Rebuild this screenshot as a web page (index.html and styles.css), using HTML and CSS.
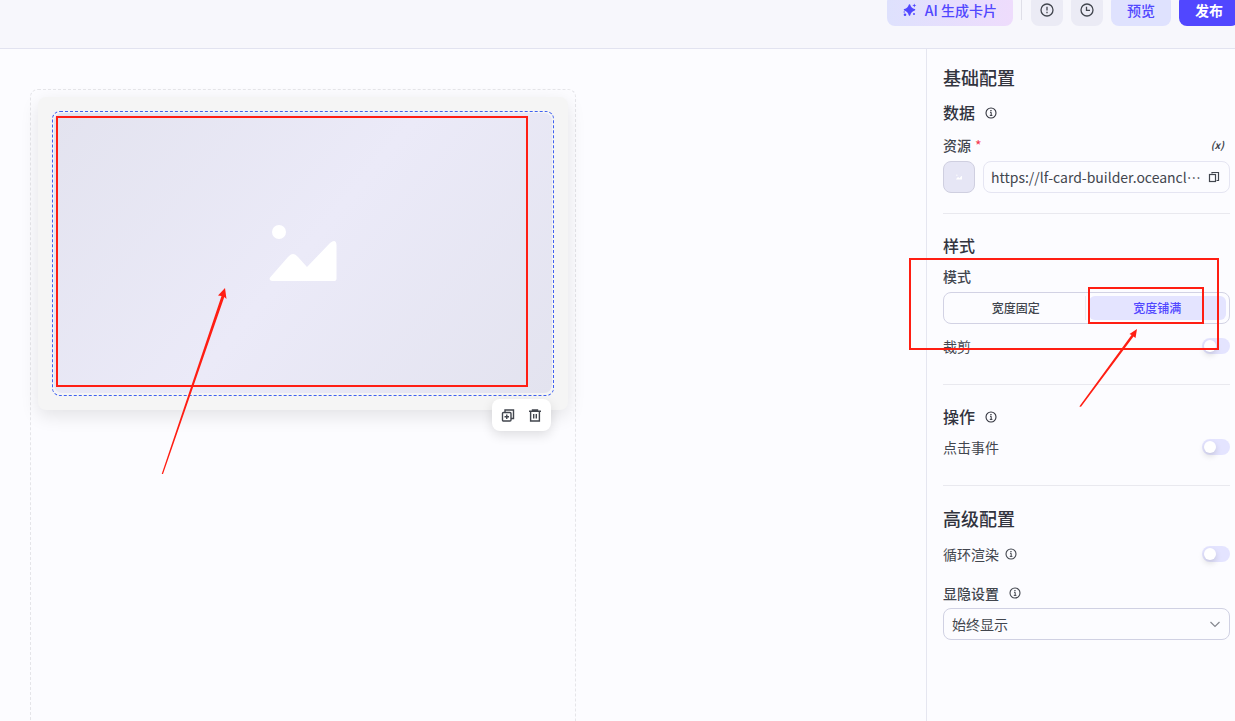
FILE: index.html
```html
<!DOCTYPE html>
<html lang="zh-CN">
<head>
	<meta charset="utf-8">
	<title>卡片搭建</title>
	<link rel="stylesheet" href="styles.css">
</head>
<body>

<svg class="symbols" aria-hidden="true">
	<symbol id="icon-info" viewBox="0 0 12 12">
		<circle cx="6" cy="6" r="5" fill="none" stroke="currentColor" stroke-width="1.1"/>
		<path d="M5 5.3h1.2v3M4.8 8.4h2.6" fill="none" stroke="currentColor"/>
		<rect x="5.3" y="3" width="1.3" height="1.2" fill="currentColor"/>
	</symbol>
	<symbol id="icon-picture" viewBox="0 0 68 56">
		<circle cx="10" cy="7" r="7" fill="currentColor"/>
		<path d="M1.5 52 19 32q5-6 10 0l9 10 23-24q6-5 6.500 2v34q0 2-2 2H3q-4-1-1.500-4z" fill="currentColor"/>
	</symbol>
</svg>

<header class="header">
	<div class="actions">
		<button class="btn btn-ai">
			<svg width="14" height="14" viewBox="0 0 14 14" fill="currentColor">
				<path d="M6.500 2C7.300 5 8.500 6 11.500 6.800 8.500 7.600 7.300 8.800 6.500 12 5.700 8.800 4.500 7.600 1.500 6.800 4.500 6 5.700 5 6.500 2z" stroke="currentColor" stroke-width="1.500" stroke-linejoin="round"/>
				<path d="M11.300.4l.6 1.500 1.500.6-1.500.6-.6 1.500-.6-1.500-1.500-.6 1.500-.6z"/>
				<circle cx="2" cy="11.800" r="1.300"/>
				<circle cx="11" cy="11" r="1"/>
				<circle cx="1.200" cy="9" r=".7"/>
			</svg>
			AI 生成卡片
		</button>
		<span class="actions-line"></span>
		<button class="btn btn-icon" aria-label="问题">
			<svg width="14" height="14" viewBox="0 0 14 14" fill="none" stroke="currentColor" stroke-width="1.300">
				<circle cx="7" cy="7" r="6"/>
				<path d="M7 3.800v3.700M7 8.700v1.500"/>
			</svg>
		</button>
		<button class="btn btn-icon" aria-label="历史">
			<svg width="14" height="14" viewBox="0 0 14 14" fill="none" stroke="currentColor" stroke-width="1.300">
				<circle cx="7" cy="7" r="6"/>
				<path d="M6.500 3.800v3.500H10"/>
			</svg>
		</button>
		<button class="btn btn-preview">预览</button>
		<button class="btn btn-publish">发布</button>
	</div>
</header>

<div class="workspace">
	<main class="canvas">
		<div class="frame">
			<div class="card">
				<div class="selected">
					<div class="picture">
						<svg width="68" height="56"><use href="#icon-picture"/></svg>
					</div>
					<div class="toolbar">
						<button class="tool" aria-label="复制">
							<svg width="14" height="14" viewBox="0 0 14 14" fill="none" stroke="currentColor" stroke-width="1.400">
								<rect x="1.500" y="4.500" width="8.500" height="8.500" rx="1"/>
								<path d="M4 4.500V2h8.500v8.500H10M5.750 6.500V11M3.500 8.750H8"/>
							</svg>
						</button>
						<button class="tool" aria-label="删除">
							<svg width="14" height="14" viewBox="0 0 14 14" fill="none" stroke="currentColor" stroke-width="1.400">
								<path d="M1 3.300h12M4.500 3V2h5v1M2.600 3.500V13h8.800V3.500M5.700 6v4.500M8.300 6v4.500"/>
							</svg>
						</button>
					</div>
				</div>
			</div>
		</div>
		<svg class="marks marks-canvas" width="500" height="380" aria-hidden="true">
			<rect x="7" y="8" width="470" height="269"/>
			<path d="M111.700 365 171.500 187 168 186.500 175 179 176.500 190 174.300 188 113 365z"/>
		</svg>
	</main>

	<aside class="panel">
		<h2 class="title">基础配置</h2>

		<h3 class="subtitle">数据 <svg class="info"><use href="#icon-info"/></svg></h3>
		<div class="field">
			<div class="row">
				<label class="label" for="source">资源 <span class="required">*</span></label>
				<button class="variable">(x)</button>
			</div>
			<div class="source">
				<span class="thumb">
					<svg width="6" height="6"><use href="#icon-picture"/></svg>
				</span>
				<div class="textbox">
					<input id="source" type="text" value="https://lf-card-builder.oceancl⋯" readonly>
					<button class="copy" aria-label="复制链接">
						<svg width="12" height="12" viewBox="0 0 12 12" fill="none" stroke="currentColor" stroke-width="1.200">
							<path d="M4 2.500v-1h6.500v8h-2"/>
							<rect x="1.500" y="3.500" width="6" height="7"/>
						</svg>
					</button>
				</div>
			</div>
		</div>

		<hr>

		<h3 class="subtitle">样式</h3>
		<div class="field">
			<div class="label" id="mode">模式</div>
			<div class="segment" role="radiogroup" aria-labelledby="mode">
				<label><input type="radio" name="mode"><span>宽度固定</span></label>
				<label><input type="radio" name="mode" checked><span>宽度铺满</span></label>
			</div>
		</div>
		<div class="row option">
			<label for="crop">裁剪</label>
			<input class="switch" id="crop" type="checkbox">
		</div>

		<hr>

		<h3 class="subtitle">操作 <svg class="info"><use href="#icon-info"/></svg></h3>
		<div class="row event">
			<label for="click">点击事件</label>
			<input class="switch" id="click" type="checkbox">
		</div>

		<hr>

		<h2 class="title">高级配置</h2>
		<div class="row option">
			<label for="loop">循环渲染 <svg class="info"><use href="#icon-info"/></svg></label>
			<input class="switch" id="loop" type="checkbox">
		</div>
		<div class="field visibility">
			<label class="label" for="visibility">显隐设置 <svg class="info"><use href="#icon-info"/></svg></label>
			<div class="select">
				<select id="visibility">
					<option>始终显示</option>
				</select>
				<svg width="12" height="12" viewBox="0 0 12 12" fill="none" stroke="currentColor" stroke-width="1.200"><path d="M1.500 4 6 8.500 10.500 4"/></svg>
			</div>
		</div>

		<svg class="marks marks-panel" width="320" height="160" aria-hidden="true">
			<rect x="2" y="10" width="308" height="90"/>
			<rect x="181" y="39" width="114" height="35"/>
			<path d="M171.300 157.500 223.500 86 221.500 85 229 80 227.500 89 225.500 87.500 173 157.800z"/>
		</svg>
	</aside>
</div>

</body>
</html>
```
FILE: styles.css
```css
* {
	box-sizing: border-box;
}

body {
	margin: 0;
	height: 100vh;
	display: flex;
	flex-direction: column;
	overflow: hidden;
	background: #fcfcff;
	color: #42464e;
	font-family: "Noto Sans CJK SC", sans-serif;
	font-size: 14px;
	line-height: 22px;
}

button, input, select {
	font: inherit;
	color: inherit;
	margin: 0;
}

button {
	border: 0;
	padding: 0;
	background: none;
	cursor: pointer;
}

svg {
	display: block;
}

.symbols {
	display: none;
}

/* header, partly scrolled away */
.header {
	flex: none;
	height: 77px;
	margin-top: -28px;
	display: flex;
	align-items: center;
	justify-content: flex-end;
	background: #f7f7fc;
	border-bottom: 1px solid #e2e3f0;
}

.actions {
	display: flex;
	align-items: center;
	gap: 8px;
	margin-right: -4px;
}

.actions-line {
	width: 1px;
	height: 20px;
	margin-right: 1px;
	background: #dfdfe8;
}

.btn {
	display: flex;
	align-items: center;
	justify-content: center;
	height: 32px;
	padding: 0 16px;
	border-radius: 8px;
	font-weight: 500;
}

.btn-ai {
	gap: 8px;
	color: #5147ff;
	background: linear-gradient(90deg, #dee1fd, #eedcfc);
}

.btn-icon {
	width: 32px;
	padding: 0;
	background: #ebebf5;
}

.btn-preview {
	color: #5147ff;
	background: #dfe2fe;
}

.btn-publish {
	color: white;
	background: #5147ff;
	font-weight: bold;
}

.workspace {
	flex: 1;
	min-height: 0;
	display: flex;
}

/* canvas */
.canvas {
	position: relative;
	flex: 1;
	min-width: 0;
	display: flex;
	padding: 40px 30px 0;
}

.frame {
	flex: 0 1 546px;
	padding: 7px;
	border: 1px dashed #e5e5e9;
	border-bottom: 0;
	border-radius: 8px 8px 0 0;
}

.card {
	padding: 14px;
	border-radius: 8px;
	background: #f5f5f5;
	box-shadow: 0 6px 18px rgba(0, 0, 0, 0.1);
}

.selected {
	position: relative;
	padding: 1px 1px 2px;
	border: 1px dashed #4061f0;
	border-radius: 8px;
}

.picture {
	display: flex;
	align-items: center;
	justify-content: center;
	aspect-ratio: 16 / 9;
	border-radius: 8px;
	color: white;
	background: linear-gradient(130deg, #e3e3ef, #ebeaf8 50%, #e3e3ef);
}

.toolbar {
	position: absolute;
	top: 100%;
	right: 2px;
	display: flex;
	gap: 13px;
	margin-top: 4px;
	padding: 9px;
	border-radius: 8px;
	background: white;
	box-shadow: 0 4px 12px rgba(0, 0, 0, 0.12);
}

.tool {
	width: 14px;
	height: 14px;
}

/* settings */
.panel {
	position: relative;
	flex: none;
	width: 309px;
	padding: 15px 5px 16px 16px;
	border-left: 1px solid #e5e6f0;
}

.title, .subtitle {
	margin: 0;
	font-weight: 500;
	color: #32343e;
}

.title {
	font-size: 18px;
	line-height: 26px;
}

.subtitle {
	display: flex;
	align-items: center;
	gap: 10px;
	font-size: 16px;
	line-height: 24px;
}

.title + .subtitle {
	margin-top: 10px;
}

.field {
	margin-top: 8px;
}

.subtitle + .field:has(.source) {
	margin-top: 10px;
}

.row {
	display: flex;
	align-items: center;
	justify-content: space-between;
}

.row label {
	display: flex;
	align-items: center;
	gap: 6px;
}

.option {
	margin-top: 11px;
}

.title + .option {
	margin-top: 12px;
}

.event {
	margin-top: 8px;
}

.label {
	display: flex;
	align-items: center;
	gap: 10px;
	font-weight: 500;
}

.row .label {
	gap: 4px;
}

.required {
	color: #f5384e;
	font-weight: normal;
}

.info {
	width: 12px;
	height: 12px;
}

.subtitle .info {
	margin-top: 2px;
}

.variable {
	margin-right: 6px;
	font-size: 10px;
	font-style: italic;
	font-weight: bold;
}

hr {
	margin: 27px 0 19px;
	border: 0;
	border-top: 1px solid #e9e9ef;
}

.field:has(.source) + hr {
	margin-top: 20px;
}

.source {
	display: flex;
	gap: 8px;
	margin-top: 5px;
}

.thumb {
	flex: none;
	display: flex;
	align-items: center;
	justify-content: center;
	width: 32px;
	height: 32px;
	border: 1px solid #cfcfe0;
	border-radius: 8px;
	color: white;
	background: #e6e6f5;
}

.textbox {
	flex: 1;
	min-width: 0;
	display: flex;
	align-items: center;
	height: 32px;
	padding: 0 9px 0 7px;
	border: 1px solid #e5e5f2;
	border-radius: 8px;
}

.textbox input {
	flex: 1;
	min-width: 0;
	padding: 0;
	border: 0;
	outline: 0;
	background: none;
}

.segment {
	display: flex;
	height: 32px;
	margin-top: 5px;
	padding: 3px;
	border: 1px solid #d2d2e4;
	border-radius: 8px;
	font-size: 12px;
}

.segment label {
	flex: 1;
	display: flex;
}

.segment label + label {
	border-left: 1px solid #ebebf2;
	padding-left: 3px;
}

.segment input {
	appearance: none;
	width: 0;
}

.segment span {
	flex: 1;
	border-radius: 6px;
	line-height: 24px;
	text-align: center;
	font-weight: 500;
}

.segment input:checked + span {
	color: #5147ff;
	background: #e4e4ff;
}

.switch {
	appearance: none;
	width: 28px;
	height: 16px;
	padding: 2px;
	border-radius: 8px;
	background: #e4e4ff;
	cursor: pointer;
}

.switch::before {
	content: "";
	display: block;
	width: 12px;
	height: 12px;
	border-radius: 50%;
	background: white;
	box-shadow: 0 3px 6px rgba(0, 0, 0, 0.15);
}

.switch:checked::before {
	margin-left: auto;
}

.visibility {
	margin-top: 17px;
}

.select {
	display: grid;
	align-items: center;
	margin-top: 4px;
}

.select select, .select svg {
	grid-area: 1 / 1;
}

.select select {
	appearance: none;
	height: 32px;
	padding: 0 8px;
	border: 1px solid #d0d1e3;
	border-radius: 8px;
	background: none;
}

.select svg {
	justify-self: end;
	margin-right: 9px;
	color: #85878f;
	pointer-events: none;
}

/* red marks over the page */
.marks {
	position: absolute;
	fill: #ff1e13;
	pointer-events: none;
}

.marks rect {
	fill: none;
	stroke: #ff1e13;
	stroke-width: 2;
}

.marks-canvas {
	left: 50px;
	top: 60px;
}

.marks-panel {
	right: 7px;
	top: 200px;
}
```
